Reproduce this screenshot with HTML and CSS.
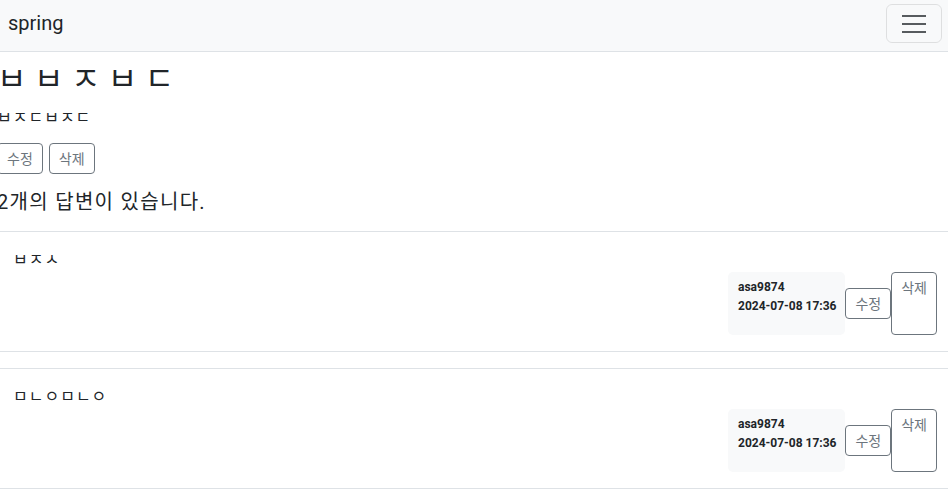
FILE: index.html
```html
<!DOCTYPE html>
<html lang="ko">
<head>
<meta charset="utf-8">
<title>spring</title>
<link rel="stylesheet" href="styles.css">
</head>
<body>
<nav class="navbar">
  <a class="navbar-brand" href="#">spring</a>
  <button class="navbar-toggler" type="button" aria-label="Toggle navigation">
    <svg class="toggler-icon" viewBox="0 0 30 30" width="30" height="30" aria-hidden="true">
      <path d="M3 7h24M3 15h24M3 23h24" stroke="rgba(33,37,41,0.75)" stroke-width="2" stroke-linecap="butt" fill="none"/>
    </svg>
  </button>
</nav>
<main class="page">
  <h2 class="question-title">ㅂㅂㅈㅂㄷ</h2>
  <div class="question-body">ㅂㅈㄷㅂㅈㄷ</div>
  <div class="question-actions">
    <a class="btn" href="#">수정</a>
    <a class="btn" href="#">삭제</a>
  </div>
  <h5 class="answer-count">2개의 답변이 있습니다.</h5>

  <div class="answer-card">
    <div class="answer-body">
      <div class="answer-text">ㅂㅈㅅ</div>
      <div class="answer-meta">
        <div class="author-badge">
          <div class="author-line">asa9874</div>
          <div class="author-line">2024-07-08 17:36</div>
        </div>
        <a class="btn btn-edit" href="#">수정</a>
        <a class="btn btn-delete" href="#">삭제</a>
      </div>
    </div>
  </div>

  <div class="answer-card">
    <div class="answer-body">
      <div class="answer-text">ㅁㄴㅇㅁㄴㅇ</div>
      <div class="answer-meta">
        <div class="author-badge">
          <div class="author-line">asa9874</div>
          <div class="author-line">2024-07-08 17:36</div>
        </div>
        <a class="btn btn-edit" href="#">수정</a>
        <a class="btn btn-delete" href="#">삭제</a>
      </div>
    </div>
  </div>
</main>
</body>
</html>
```
FILE: styles.css
```css
html, body {
  margin: 0;
  padding: 0;
  overflow: hidden;
}
body {
  font-family: Roboto, "Noto Sans CJK KR", sans-serif;
  font-size: 16px;
  line-height: 1.5;
  color: #212529;
  background: #fff;
}
a { text-decoration: none; }

.navbar {
  box-sizing: border-box;
  height: 52px;
  display: flex;
  align-items: flex-start;
  justify-content: space-between;
  padding: 0 6px 0 8px;
  background: #f8f9fa;
  border-bottom: 1px solid #dee2e6;
}
.navbar-brand {
  font-size: 20px;
  line-height: 30px;
  margin-top: 8px;
  color: #212529;
}
.navbar-toggler {
  margin-top: 4px;
  width: 56px;
  height: 39px;
  padding: 0;
  display: flex;
  align-items: center;
  justify-content: center;
  background: transparent;
  border: 1px solid rgba(0,0,0,0.1);
  border-radius: 6px;
}
.toggler-icon { display: block; }

.page {
  width: 956px;
  margin-left: -3px;
  padding-top: 8px;
}
.question-title {
  margin: 0 0 8px;
  font-size: 32px;
  font-weight: 400;
  letter-spacing: 7.5px;
  line-height: 1.2;
}
.question-body {
  margin-bottom: 13px;
  letter-spacing: 1px;
}
.question-actions {
  display: flex;
  gap: 6px;
  margin-bottom: 16px;
}
.btn {
  display: inline-block;
  box-sizing: border-box;
  padding: 4px 9px;
  font-size: 14px;
  line-height: 21px;
  color: #6c757d;
  border: 1px solid #6c757d;
  border-radius: 4px;
  background: transparent;
  font-family: "Noto Sans CJK KR", sans-serif;
}
.answer-count {
  margin: 0 0 17px;
  font-size: 20px;
  font-weight: 400;
  letter-spacing: 1.3px;
  line-height: 1.2;
}
.answer-card {
  margin: 16px 0;
  border-top: 1px solid #dee2e6;
  border-bottom: 1px solid #dee2e6;
}
.answer-body {
  padding: 16px;
}
.answer-text {
  line-height: 24px;
  letter-spacing: 1px;
}
.answer-meta {
  display: flex;
  justify-content: flex-end;
  align-items: stretch;
}
.author-badge {
  box-sizing: border-box;
  min-height: 63px;
  padding: 6px 9px 0 10px;
  background: #f8f9fa;
  border-radius: 5px;
  font-size: 12px;
  font-weight: 700;
  line-height: 19px;
}
.btn-edit {
  align-self: center;
}
```
